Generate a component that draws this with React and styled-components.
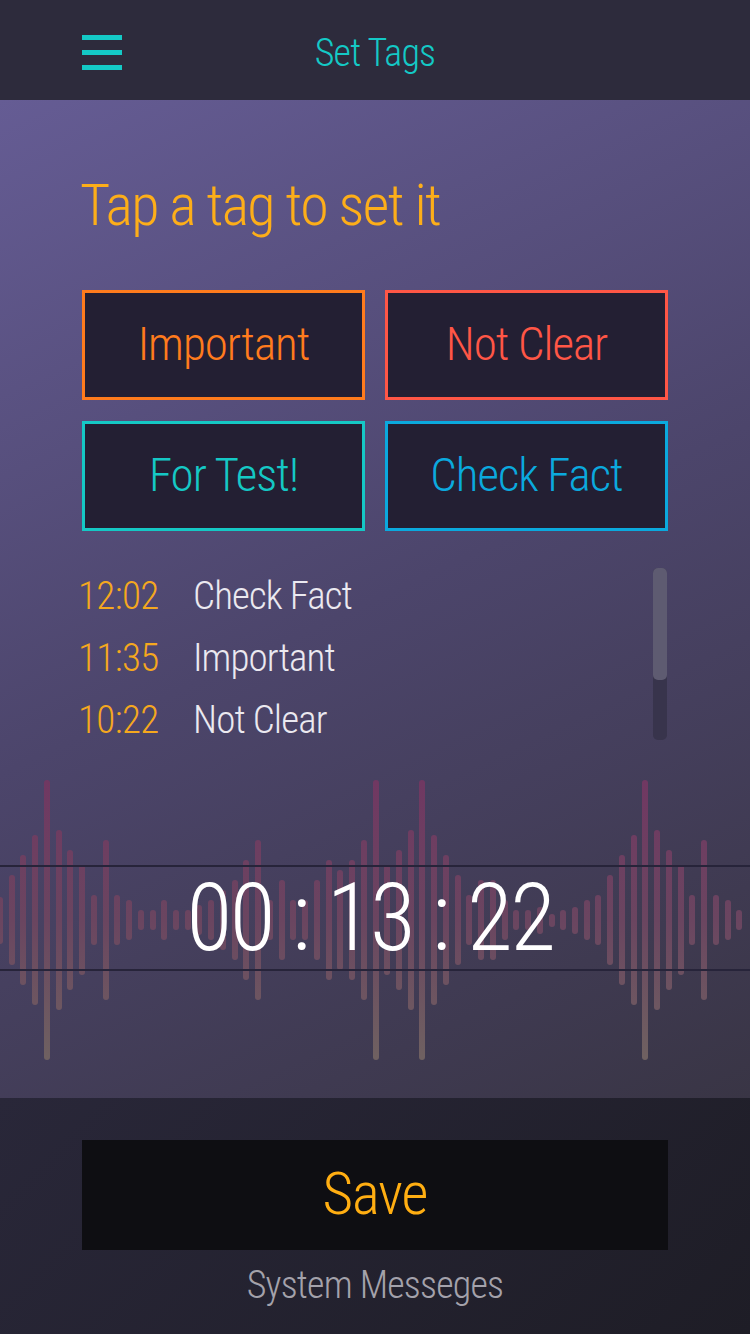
import React from "react";
import styled, { createGlobalStyle } from "styled-components";

const GlobalStyle = createGlobalStyle`
  body {
    margin: 0;
    background: #232130;
    font-family: "Roboto Condensed", Roboto, "Liberation Sans", sans-serif;
    font-weight: 300;
  }
`;

const Screen = styled.div`
  width: 750px;
  height: 1334px;
  display: flex;
  flex-direction: column;
  overflow: hidden;
`;

const Header = styled.header`
  height: 100px;
  box-sizing: border-box;
  padding-top: 5px;
  background: #2d2b3c;
  display: grid;
  grid-template-columns: 1fr auto 1fr;
  align-items: center;
`;

const MenuButton = styled.button`
  justify-self: start;
  margin-left: 82px;
  padding: 0;
  border: 0;
  background: none;
  display: flex;
  cursor: pointer;
`;

const HeaderTitle = styled.h1`
  margin: 0;
  font-size: 38px;
  line-height: 1;
  font-weight: 300;
  color: #14c9c6;
  letter-spacing: -0.8px;
`;

const Main = styled.main`
  height: 998px;
  box-sizing: border-box;
  padding-top: 76px;
  background: linear-gradient(155deg, #655c94 0%, #4c456b 50%, #393545 100%);
  display: flex;
  flex-direction: column;
`;

const Prompt = styled.h2`
  margin: 0 0 0 80px;
  font-size: 58px;
  line-height: 1;
  font-weight: 300;
  letter-spacing: -1.6px;
  color: #fdae19;
`;

const TagGrid = styled.div`
  margin: 56px 0 0 82px;
  display: grid;
  grid-template-columns: 283px 283px;
  grid-auto-rows: 110px;
  column-gap: 20px;
  row-gap: 21px;
`;

const TagButton = styled.button`
  box-sizing: border-box;
  border: 3px solid ${(p) => p.$color};
  background: #231f33;
  color: ${(p) => p.$color};
  font-family: inherit;
  font-weight: 300;
  font-size: 47px;
  letter-spacing: -1px;
  line-height: 1;
  padding: 0 0 4px;
  cursor: pointer;
`;

const History = styled.div`
  margin-top: 34px;
  display: flex;
  padding-right: 83px;
`;

const HistoryList = styled.ul`
  flex: 1;
  margin: 0;
  padding: 0 0 0 78px;
  list-style: none;
`;

const HistoryRow = styled.li`
  height: 62px;
  line-height: 62px;
  font-size: 39px;
  display: flex;
`;

const Time = styled.span`
  width: 115px;
  color: #f5a81e;
  letter-spacing: -0.6px;
`;

const Label = styled.span`
  color: #ebe9f0;
  letter-spacing: -0.9px;
`;

const ScrollTrack = styled.div`
  margin-top: 3px;
  width: 14px;
  height: 172px;
  border-radius: 5px;
  background: #38344c;
  display: flex;
  flex-direction: column;
`;

const ScrollThumb = styled.div`
  height: 112px;
  border-radius: 5px;
  background: #5e5b71;
`;

const Wave = styled.div`
  margin-top: 29px;
  height: 280px;
  display: grid;
`;

const Bars = styled.div`
  grid-area: 1 / 1;
  width: 746px;
  margin-left: -3px;
  display: flex;
  justify-content: space-between;
  align-items: center;
`;

const Bar = styled.span`
  width: 6px;
  border-radius: 3px;
  background: linear-gradient(180deg, #703862 0%, #6a4560 50%, #6f6161 100%);
  background-size: 100% 280px;
  background-position: center;
`;

const TimerBand = styled.div`
  grid-area: 1 / 1;
  align-self: center;
  margin-top: -5px;
  height: 102px;
  border-top: 2px solid #27243a;
  border-bottom: 2px solid #27243a;
  display: flex;
  align-items: center;
  justify-content: center;
  position: relative;
`;

const Timer = styled.div`
  margin-right: 10px;
  font-size: 94px;
  line-height: 1;
  font-weight: 300;
  letter-spacing: -2.5px;
  color: #ffffff;
`;

const Footer = styled.footer`
  flex: 1;
  background: linear-gradient(135deg, #292739 0%, #1e1d26 100%);
  display: flex;
  flex-direction: column;
  align-items: center;
  padding-top: 42px;
`;

const SaveButton = styled.button`
  width: 586px;
  height: 110px;
  border: 0;
  background: #0e0e12;
  color: #ffae12;
  font-family: inherit;
  font-weight: 300;
  font-size: 59px;
  letter-spacing: -1.2px;
  line-height: 1;
  padding: 0 0 4px;
  cursor: pointer;
`;

const Messages = styled.div`
  margin-top: 16px;
  font-size: 38px;
  line-height: 1;
  color: #a4a2ab;
  letter-spacing: -0.8px;
`;

const tags = [
  { name: "Important", color: "#ff7b1d" },
  { name: "Not Clear", color: "#ff5646" },
  { name: "For Test!", color: "#15c8c5" },
  { name: "Check Fact", color: "#0ba9de" },
];

const history = [
  { time: "12:02", tag: "Check Fact" },
  { time: "11:35", tag: "Important" },
  { time: "10:22", tag: "Not Clear" },
];

const bars = [
  47, 90, 130, 170, 280, 180, 140, 110, 50, 160, 50, 40, 20, 20, 40, 20, 20,
  30, 40, 60, 80, 120, 160, 40, 80, 40, 40, 80, 120, 100, 120, 160, 280,
  110, 140, 180, 280, 170, 130, 90, 50, 80, 80, 40, 20, 20, 27, 13, 20, 27,
  40, 50, 90, 130, 170, 280, 180, 140, 110, 50, 160, 50, 40, 20,
];

const MenuIcon = () => (
  <svg width="40" height="35" viewBox="0 0 40 35">
    <rect x="0" y="0" width="40" height="5" fill="#14c9c6" />
    <rect x="0" y="15" width="40" height="5" fill="#14c9c6" />
    <rect x="0" y="30" width="40" height="5" fill="#14c9c6" />
  </svg>
);

export default function App() {
  return (
    <Screen>
      <GlobalStyle />
      <Header>
        <MenuButton aria-label="Menu">
          <MenuIcon />
        </MenuButton>
        <HeaderTitle>Set Tags</HeaderTitle>
      </Header>
      <Main>
        <Prompt>Tap a tag to set it</Prompt>
        <TagGrid>
          {tags.map((t) => (
            <TagButton key={t.name} $color={t.color}>
              {t.name}
            </TagButton>
          ))}
        </TagGrid>
        <History>
          <HistoryList>
            {history.map((h) => (
              <HistoryRow key={h.time}>
                <Time>{h.time}</Time>
                <Label>{h.tag}</Label>
              </HistoryRow>
            ))}
          </HistoryList>
          <ScrollTrack>
            <ScrollThumb />
          </ScrollTrack>
        </History>
        <Wave>
          <Bars>
            {bars.map((h, i) => (
              <Bar key={i} style={{ height: h }} />
            ))}
          </Bars>
          <TimerBand>
            <Timer>00 : 13 : 22</Timer>
          </TimerBand>
        </Wave>
      </Main>
      <Footer>
        <SaveButton>Save</SaveButton>
        <Messages>System Messeges</Messages>
      </Footer>
    </Screen>
  );
}
